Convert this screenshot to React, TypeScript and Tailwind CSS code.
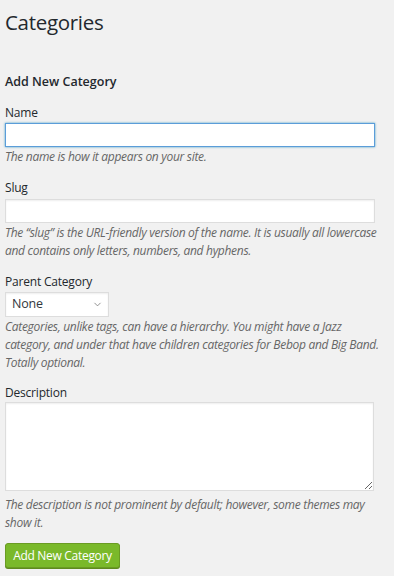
import { ChevronDown } from "lucide-react";

const font = { fontFamily: '"Open Sans", "Noto Sans", sans-serif' };

export default function App() {
  return (
    <div className="min-h-[576px] w-[394px] bg-[#f1f1f1] pl-[5px] pr-[3px] pt-[7px] text-[12px] tracking-[-0.2px] text-[#444]" style={font}>
      <h1 className="text-[20.5px] font-normal leading-[30px] tracking-[-0.3px] text-[#23282d]">Categories</h1>

      <h2 className="mt-[36px] text-[12.5px] font-semibold leading-[18px] tracking-normal text-[#23282d]">Add New Category</h2>

      <form className="flex flex-col" onSubmit={(e) => e.preventDefault()}>
        {/* Name */}
        <label htmlFor="tag-name" className="mt-[13px] block leading-[18px] text-[#23282d]">
          Name
        </label>
        <input
          id="tag-name"
          type="text"
          autoFocus
          className="mt-[1px] h-[24px] w-[370px] border border-[#5b9dd9] bg-white px-[4px] text-[13px] shadow-[0_0_2px_rgba(30,140,190,0.8)] outline-none"
        />
        <p className="mt-[1px] italic leading-[18px] tracking-[-0.3px] text-[#666]">The name is how it appears on your site.</p>

        {/* Slug */}
        <label htmlFor="tag-slug" className="mt-[13px] block leading-[18px] text-[#23282d]">
          Slug
        </label>
        <input
          id="tag-slug"
          type="text"
          className="mt-[2px] h-[24px] w-[370px] border border-[#ddd] bg-white px-[4px] text-[13px] shadow-[inset_0_1px_2px_rgba(0,0,0,0.07)] outline-none"
        />
        <p className="mt-[1px] italic leading-[18px] tracking-[-0.3px] text-[#666]">
          The “slug” is the URL-friendly version of the name. It is usually all lowercase and contains only letters, numbers, and hyphens.
        </p>

        {/* Parent */}
        <label htmlFor="parent" className="mt-[13px] block leading-[18px] text-[#23282d]">
          Parent Category
        </label>
        <div className="relative mt-[1px] w-[104px]">
          <select
            id="parent"
            className="h-[25px] w-full appearance-none border border-[#ddd] bg-white pl-[6px] text-[12.5px] text-[#32373c] shadow-[inset_0_1px_2px_rgba(0,0,0,0.07)] outline-none"
            style={font}
          >
            <option>None</option>
          </select>
          <ChevronDown className="pointer-events-none absolute right-[6px] top-[7px] h-[11px] w-[11px] text-[#777]" strokeWidth={1.75} />
        </div>
        <p className="mt-[1px] w-[378px] italic leading-[18px] tracking-[-0.3px] text-[#666]">
          Categories, unlike tags, can have a hierarchy. You might have a Jazz category, and under that have children categories for Bebop and Big Band. Totally optional.
        </p>

        {/* Description */}
        <label htmlFor="tag-description" className="mt-[12px] block leading-[18px] text-[#23282d]">
          Description
        </label>
        <textarea
          id="tag-description"
          className="h-[89px] w-[369px] border border-[#ddd] bg-white p-[4px] text-[13px] shadow-[inset_0_1px_2px_rgba(0,0,0,0.07)] outline-none"
        />
        <p className="mt-[5px] italic leading-[18px] tracking-[-0.3px] text-[#666]">
          The description is not prominent by default; however, some themes may show it.
        </p>

        <div className="mt-[11px]">
          <button
            type="submit"
            className="h-[25px] w-[115px] rounded-[3px] border border-[#6a9b23] bg-[#7ab92a] text-[12px] leading-[23px] tracking-[-0.3px] text-white shadow-[0_1px_0_#5e8a1e]"
          >
            Add New Category
          </button>
        </div>
      </form>
    </div>
  );
}
